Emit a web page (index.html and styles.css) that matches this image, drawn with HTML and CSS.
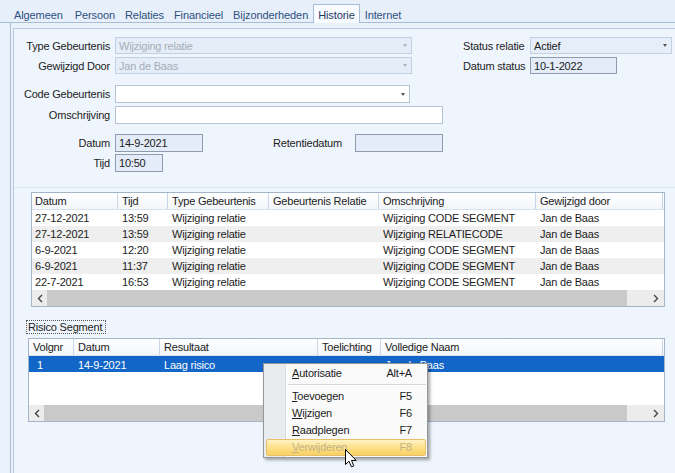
FILE: index.html
```html
<!DOCTYPE html>
<html lang="nl">
<head>
<meta charset="utf-8">
<title>Historie</title>
<link rel="stylesheet" href="styles.css">
</head>
<body>
<div class="tabs">
  <span class="tab">Algemeen</span>
  <span class="tab">Persoon</span>
  <span class="tab">Relaties</span>
  <span class="tab">Financieel</span>
  <span class="tab">Bijzonderheden</span>
  <span class="tab active">Historie</span>
  <span class="tab">Internet</span>
</div>
<div class="tabpage">
  <div class="panel">
    <div class="top">
      <div class="frow">
        <span class="lbl">Type Gebeurtenis</span>
        <span class="field sel dis w297"><span>Wijziging relatie</span><i class="arr"></i></span>
        <span class="rlbl">Status relatie</span>
        <span class="field sel tint w142"><span class="dark">Actief</span><i class="arr"></i></span>
      </div>
      <div class="frow">
        <span class="lbl">Gewijzigd Door</span>
        <span class="field sel dis w297"><span>Jan de Baas</span><i class="arr"></i></span>
        <span class="rlbl">Datum status</span>
        <span class="field ro w87">10-1-2022</span>
      </div>
      <div class="frow tall gap11">
        <span class="lbl">Code Gebeurtenis</span>
        <span class="field sel white w295"><span></span><i class="arr"></i></span>
      </div>
      <div class="frow tall">
        <span class="lbl">Omschrijving</span>
        <span class="field white w328"></span>
      </div>
      <div class="frow tall gap10">
        <span class="lbl">Datum</span>
        <span class="field ro w88">14-9-2021</span>
        <span class="mlbl">Retentiedatum</span>
        <span class="field ro w88"></span>
      </div>
      <div class="frow tall gap-1">
        <span class="lbl">Tijd</span>
        <span class="field ro w48">10:50</span>
      </div>
    </div>

    <div class="grid g1">
      <div class="ghead">
        <span>Datum</span><span>Tijd</span><span>Type Gebeurtenis</span><span>Gebeurtenis Relatie</span><span>Omschrijving</span><span>Gewijzigd door</span>
      </div>
      <div class="grow"><span>27-12-2021</span><span>13:59</span><span>Wijziging relatie</span><span></span><span>Wijziging CODE SEGMENT</span><span>Jan de Baas</span></div>
      <div class="grow alt"><span>27-12-2021</span><span>13:59</span><span>Wijziging relatie</span><span></span><span>Wijziging RELATIECODE</span><span>Jan de Baas</span></div>
      <div class="grow"><span>6-9-2021</span><span>12:20</span><span>Wijziging relatie</span><span></span><span>Wijziging CODE SEGMENT</span><span>Jan de Baas</span></div>
      <div class="grow alt"><span>6-9-2021</span><span>11:37</span><span>Wijziging relatie</span><span></span><span>Wijziging CODE SEGMENT</span><span>Jan de Baas</span></div>
      <div class="grow"><span>22-7-2021</span><span>16:53</span><span>Wijziging relatie</span><span></span><span>Wijziging CODE SEGMENT</span><span>Jan de Baas</span></div>
      <div class="hscroll">
        <span class="sbtn"><svg width="6" height="9" viewBox="0 0 6 9"><polyline points="5,1 1.5,4.5 5,8" fill="none" stroke="#444" stroke-width="1.4"/></svg></span>
        <span class="thumb t1"></span>
        <span class="track"></span>
        <span class="sbtn"><svg width="6" height="9" viewBox="0 0 6 9"><polyline points="1,1 4.5,4.5 1,8" fill="none" stroke="#444" stroke-width="1.4"/></svg></span>
      </div>
    </div>

    <div class="seglabel">Risico Segment</div>

    <div class="grid g2">
      <div class="ghead">
        <span>Volgnr</span><span>Datum</span><span>Resultaat</span><span>Toelichting</span><span>Volledige Naam</span>
      </div>
      <div class="grow selected"><span>1</span><span>14-9-2021</span><span>Laag risico</span><span></span><span>Jan de Baas</span></div>
      <div class="gempty"></div>
      <div class="hscroll">
        <span class="sbtn"><svg width="6" height="9" viewBox="0 0 6 9"><polyline points="5,1 1.5,4.5 5,8" fill="none" stroke="#444" stroke-width="1.4"/></svg></span>
        <span class="thumb t2"></span>
        <span class="track"></span>
        <span class="sbtn"><svg width="6" height="9" viewBox="0 0 6 9"><polyline points="1,1 4.5,4.5 1,8" fill="none" stroke="#444" stroke-width="1.4"/></svg></span>
      </div>
    </div>
  </div>
</div>

<div class="ctxmenu">
  <div class="mi"><span><u>A</u>utorisatie</span><span>Alt+A</span></div>
  <div class="msep"></div>
  <div class="mi"><span><u>T</u>oevoegen</span><span>F5</span></div>
  <div class="mi"><span><u>W</u>ijzigen</span><span>F6</span></div>
  <div class="mi"><span><u>R</u>aadplegen</span><span>F7</span></div>
  <div class="mi hot"><span><u>V</u>erwijderen</span><span>F8</span></div>
</div>

<svg class="cursor" width="13" height="20" viewBox="0 0 13 20">
  <path d="M0.5 0.5 L0.5 15.5 L4 12.2 L6.4 17.8 L8.8 16.8 L6.5 11.4 L11.2 11.4 Z" fill="#fff" stroke="#000" stroke-width="1" stroke-linejoin="round"/>
</svg>
</body>
</html>
```

FILE: styles.css
```css
* { box-sizing: border-box; }

body {
  margin: 0;
  width: 675px;
  height: 473px;
  overflow: hidden;
  position: relative;
  background: #e9f1fb;
  font-family: "Liberation Sans", Arial, sans-serif;
  font-size: 11px;
  letter-spacing: -0.2px;
  color: #1c1c1c;
}

/* tabs */
.tabs {
  display: flex;
  align-items: flex-end;
  height: 23px;
  padding-left: 9px;
  border-bottom: 1px solid #a9bdd6;
  background: #e7f0fa;
  letter-spacing: -0.1px;
}
.tab {
  height: 18px;
  padding: 3px 5px 0;
  line-height: 16px;
  color: #2d4f7e;
  white-space: nowrap;
}
.tab:first-child { padding-right: 7px; }
.tab.active {
  background: #f8fbff;
  border: 1px solid #a9bdd6;
  border-bottom: none;
  height: 19px;
  margin-bottom: -1px;
  padding: 2px 4px 0;
  color: #1f3a62;
}

/* tab page */
.tabpage {
  margin-left: 10px;
  height: 450px;
  border-left: 1px solid #a9bdd6;
  padding: 5px 0 0 2px;
}
.panel {
  height: 100%;
  border-left: 1px solid #b9cbe0;
  border-top: 1px solid #b9cbe0;
  background: #eff5fd;
}

/* form */
.top {
  height: 159px;
  padding-top: 8px;
  border-bottom: 1px solid #dbe5f1;
}
.frow {
  display: flex;
  align-items: center;
  height: 17px;
  margin-bottom: 3px;
}
.frow.tall { height: 18px; }
.frow.gap11 { margin-top: 11px; }
.frow.gap10 { margin-top: 10px; }
.frow.gap-1 { margin-top: -1px; }

.lbl {
  width: 101px;
  padding-right: 5px;
  text-align: right;
  white-space: nowrap;
}
.rlbl {
  width: 67px;
  margin-left: 51px;
  white-space: nowrap;
}
.mlbl {
  width: 139px;
  margin-right: 13px;
  text-align: right;
  white-space: nowrap;
}

.field {
  height: 100%;
  display: flex;
  align-items: center;
  padding: 0 4px 0 3px;
  border: 1px solid #abbcd0;
  white-space: nowrap;
}
.sel { justify-content: space-between; }
.dis { background: #e4edf8; color: #a6adb6; border-color: #c2d1e2; }
.dis .arr { border-top-color: #a9b2bd; }
.tint { background: #e6eef9; border-color: #c2d1e2; }
.ro { background: #e3ecf8; border-color: #8e9cad; }
.white { background: #fff; border-color: #b4c3d4; }
.dark { color: #1c1c1c; }

.arr {
  width: 0;
  height: 0;
  border-left: 2.5px solid transparent;
  border-right: 2.5px solid transparent;
  border-top: 3px solid #555;
}

.w297 { width: 297px; }
.w295 { width: 295px; }
.w328 { width: 328px; }
.w142 { width: 142px; }
.w87 { width: 87px; }
.w88 { width: 88px; }
.w48 { width: 48px; }

/* grids */
.grid {
  background: #fff;
  border: 1px solid #a5b5c8;
}
.g1 {
  margin: 4px 0 0 17px;
  width: 634px;
}
.g2 {
  margin: 4px 0 0 14px;
  width: 637px;
}
.g1 .ghead, .g1 .grow { display: grid; grid-template-columns: 86px 50px 101px 110px 157px 127px; }
.g2 .ghead, .g2 .grow { display: grid; grid-template-columns: 45px 86px 158px 63px 282px; }

.ghead {
  height: 17px;
  background: linear-gradient(#ffffff, #f3f6fa);
  border-bottom: 1px solid #d8e2ee;
}
.ghead span {
  padding-left: 4px;
  line-height: 16px;
  border-right: 1px solid #c8d6e6;
  white-space: nowrap;
  overflow: hidden;
  color: #222;
}
.grow { height: 16px; }
.grow span {
  padding-left: 4px;
  line-height: 16px;
  white-space: nowrap;
  overflow: hidden;
}
.g1 .grow span:first-child, .g1 .ghead span:first-child { padding-left: 3px; }
.grow.alt { background: #efefef; }
.grow.selected { background: #1266c7; color: #fff; }
.grow.selected span { line-height: 18px; }
.g2 .grow span:first-child { padding-left: 8px; }
.gempty { height: 33px; }

.hscroll {
  display: flex;
  height: 16px;
  background: #ececec;
}
.sbtn {
  width: 16px;
  display: flex;
  align-items: center;
  justify-content: center;
  background: #ececec;
}
.hscroll .sbtn:first-child { width: 15px; }
.thumb { background: #c9c9c9; height: 100%; }
.t1 { width: 580px; }
.t2 { width: 583px; }
.track { flex: 1; }

.seglabel {
  margin: 13px 0 0 12px;
  width: 80px;
  height: 14px;
  line-height: 12px;
  padding-left: 1px;
  border: 1px dotted #555;
  white-space: nowrap;
}

/* context menu */
.ctxmenu {
  position: absolute;
  left: 263px;
  top: 363px;
  width: 165px;
  padding: 0 0 1px;
  border: 1px solid #979797;
  background: linear-gradient(to right, #e9ecef 0 21px, #d9dcdf 21px 22px, #ffffff 22px 23px, #fafafa 23px);
  box-shadow: 2px 2px 3px rgba(0, 0, 0, 0.35);
}
.mi {
  display: flex;
  justify-content: space-between;
  height: 17px;
  line-height: 17px;
  margin: 0 1px 0 2px;
  padding: 0 14px 0 26px;
  color: #1c1c1c;
}
.mi:first-child { height: 18px; line-height: 19px; }
.msep {
  height: 6px;
  margin: 0 1px 0 24px;
  padding-top: 2px;
}
.msep::before {
  content: "";
  display: block;
  border-top: 1px solid #d5d5d5;
  border-bottom: 1px solid #ffffff;
}
.mi.hot {
  color: #c2b285;
  background: linear-gradient(#fff4c8, #fde38f 45%, #f9d062);
  border: 1px solid #e5c16b;
  border-radius: 2px;
  padding-left: 25px;
  padding-right: 13px;
  line-height: 15px;
}

.cursor {
  position: absolute;
  left: 345px;
  top: 449px;
}
```
